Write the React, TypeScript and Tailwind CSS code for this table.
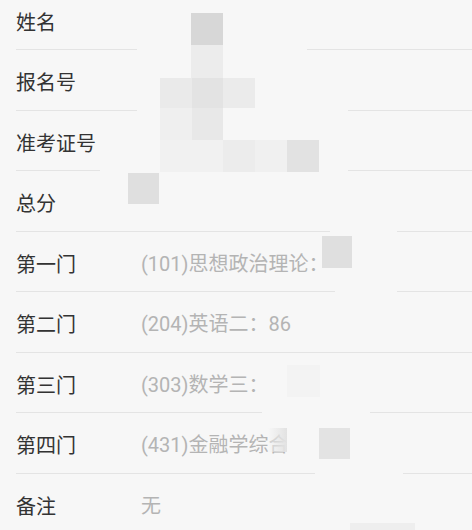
const rows = [
  { label: "姓名", value: "" },
  { label: "报名号", value: "" },
  { label: "准考证号", value: "" },
  { label: "总分", value: "" },
  { label: "第一门", value: "(101)思想政治理论：" },
  { label: "第二门", value: "(204)英语二：86" },
  { label: "第三门", value: "(303)数学三：" },
  { label: "第四门", value: "(431)金融学综合" },
  { label: "备注", value: "无" },
];

// mosaic cells that hide private data: [x, y, w, h, colour class]
const mosaic: [number, number, number, number, string][] = [
  [191, 13, 32, 32, "bg-[#d7d7d7]"],
  [191, 45, 32, 33, "bg-[#ececec]"],
  [160, 78, 32, 30, "bg-[#eaeaea]"],
  [192, 78, 31, 30, "bg-[#e3e3e3]"],
  [223, 78, 32, 30, "bg-[#ebebeb]"],
  [160, 108, 32, 32, "bg-[#efefef]"],
  [192, 108, 31, 32, "bg-[#e8e8e8]"],
  [160, 140, 63, 32, "bg-[#f1f1f1]"],
  [223, 140, 32, 32, "bg-[#ececec]"],
  [255, 140, 32, 32, "bg-[#f0f0f0]"],
  [287, 140, 32, 32, "bg-[#e2e2e2]"],
  [128, 173, 31, 31, "bg-[#dfdfdf]"],
  [322, 236, 30, 32, "bg-[#dfdfdf]"],
  [287, 365, 33, 32, "bg-[#f3f3f3]"],
  [287, 428, 32, 31, "bg-[#f7f7f7]"],
  [319, 428, 31, 31, "bg-[#e3e3e3]"],
  [350, 523, 65, 7, "bg-[#eeeeee]"],
];

// blurred gaps in the divider lines
const gaps: [number, number, number][] = [
  [49, 137, 307],
  [109, 137, 348],
  [170, 100, 160],
  [170, 319, 348],
  [231, 330, 397],
  [291, 335, 397],
  [411, 262, 370],
  [473, 315, 403],
];

export default function App() {
  return (
    <div className="relative w-[472px] h-[530px] overflow-hidden bg-[#f7f7f7]">
      <div className="mt-[-10.5px]">
        {rows.map((r) => (
          <div
            key={r.label}
            className="ml-[16px] flex h-[60.5px] items-center border-b border-[#e4e4e4] pt-[5px]"
          >
            <div className="w-[125px] shrink-0 text-[20px] leading-none text-[#333333] [font-family:'Noto_Sans_CJK_SC',sans-serif]">
              {r.label}
            </div>
            <div className="whitespace-nowrap text-[20px] leading-none text-[#b4b4b4] [font-family:Roboto,'Noto_Sans_CJK_SC',sans-serif]">
              {r.value}
            </div>
          </div>
        ))}
      </div>

      {gaps.map(([y, x1, x2], i) => (
        <div
          key={"g" + i}
          className="absolute h-[3px] bg-[#f7f7f7]"
          style={{ top: y, left: x1, width: x2 - x1 }}
        />
      ))}

      <div className="absolute left-[268px] top-[428px] h-[24px] w-[19px] bg-gradient-to-r from-[#f7f7f7]/40 to-[#e2e2e2]" />

      {mosaic.map(([x, y, w, h, c], i) => (
        <div
          key={"m" + i}
          className={"absolute " + c}
          style={{ left: x, top: y, width: w, height: h }}
        />
      ))}
    </div>
  );
}
